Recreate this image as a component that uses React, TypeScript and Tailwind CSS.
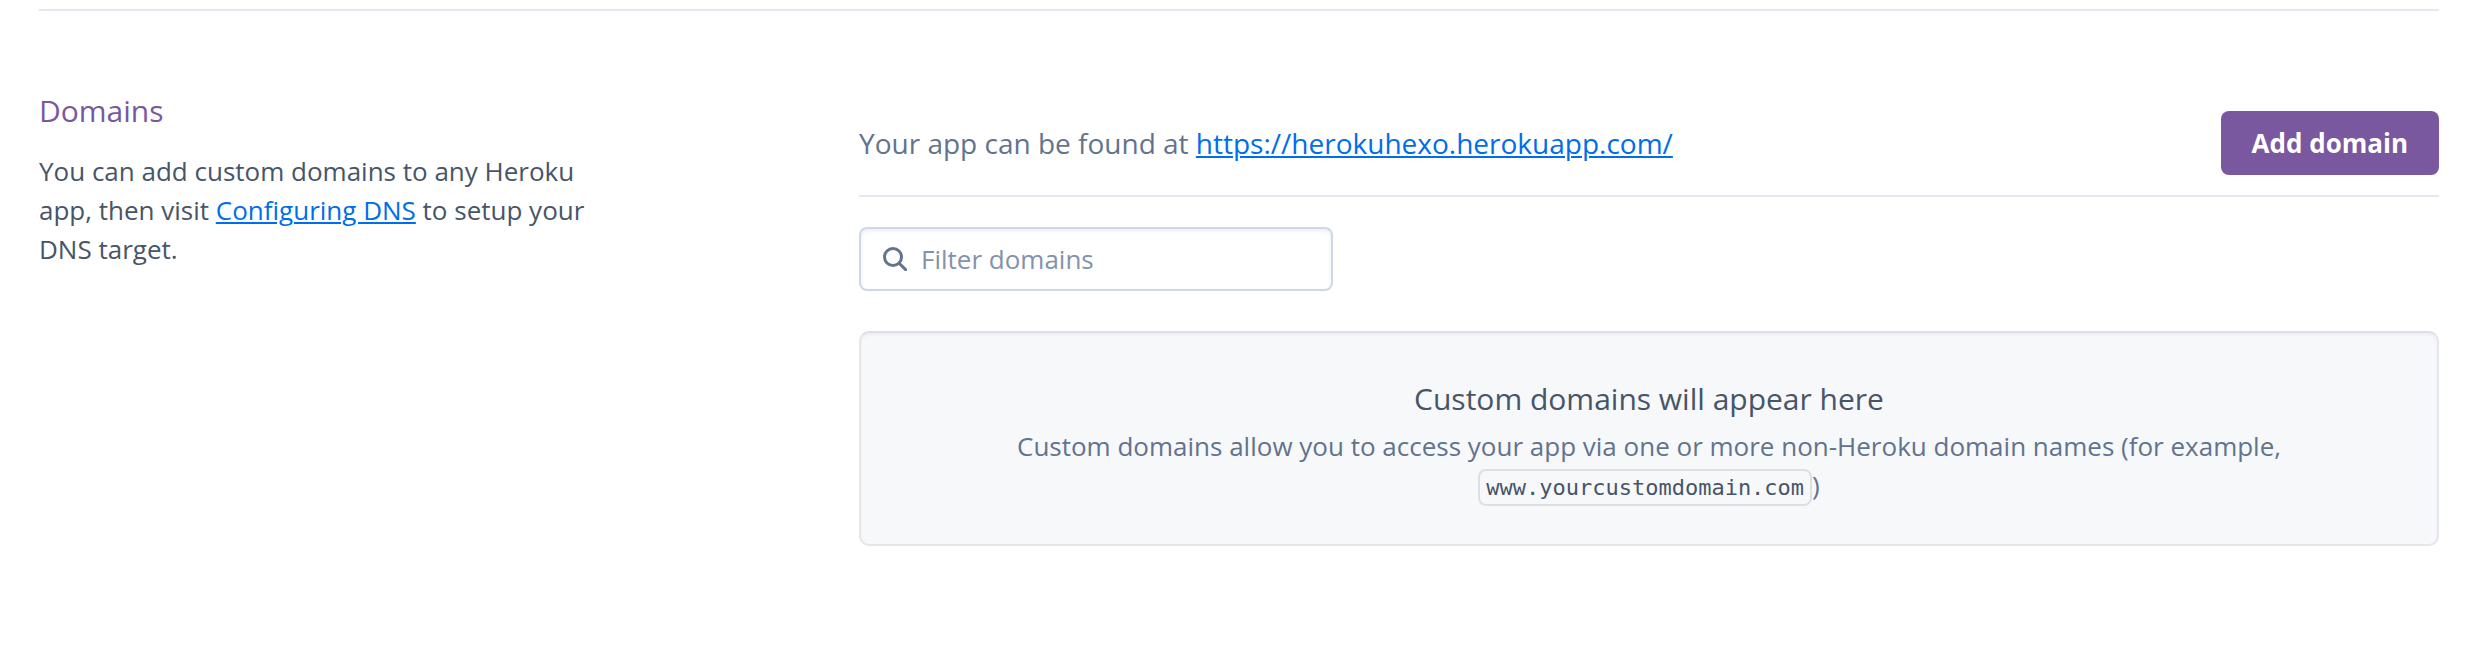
export default function App() {
  return (
    <main className="min-h-screen bg-white px-[39px] pt-[9px] font-['Open_Sans',sans-serif]">
      <section className="grid grid-cols-[1fr_2fr] gap-[30px] border-t-2 border-[#e3e8f3]">
        <div className="pt-20">
          <h2 className="text-[30px] leading-10 text-[#79589f]">Domains</h2>
          <p className="mt-[21px] max-w-[570px] text-[26px] leading-[39px] text-[#475569]">
            You can add custom domains to any Heroku app, then visit{' '}
            <a href="#dns" className="text-[#006deb] underline decoration-2 underline-offset-2">Configuring DNS</a> to setup your
            DNS target.
          </p>
        </div>

        <div className="pt-[100px]">
          <div className="flex items-center justify-between border-b-2 border-[#e3e8f3] pb-5">
            <p className="text-[28px] leading-10 text-[#62738d]">
              Your app can be found at{' '}
              <a href="https://herokuhexo.herokuapp.com/" className="text-[#006deb] underline decoration-2 underline-offset-2">
                https://herokuhexo.herokuapp.com/
              </a>
            </p>
            <button type="button" className="h-16 rounded-lg bg-[#79589f] px-[31px] text-[26px] font-bold text-white">
              Add domain
            </button>
          </div>

          <label className="mt-[30px] flex h-16 w-[30%] items-center gap-[14px] rounded-lg border-2 border-[#cfd7e6] pl-[22px] shadow-[inset_0_2px_4px_#e9edf5]">
            <svg viewBox="0 0 24 24" className="size-6 shrink-0" fill="none" stroke="#62738d" aria-hidden="true">
              <circle cx="10" cy="10" r="8.5" strokeWidth="3" />
              <path d="M16.2 16.2L22.6 22.6" strokeWidth="3" strokeLinecap="round" />
            </svg>
            <input
              type="text"
              aria-label="Filter domains"
              placeholder="Filter domains"
              className="min-w-0 flex-1 bg-transparent text-[26px] leading-[39px] text-[#475569] outline-none placeholder:text-[#8492a9]"
            />
          </label>

          <div className="mt-10 rounded-[10px] border-2 border-[#e4e6e9] border-t-[#dcdfe3] bg-[#f7f8fa] px-32 pt-[46px] pb-[37px] text-center shadow-[inset_0_2px_3px_#eceef1]">
            <h3 className="text-[30px] leading-10 text-[#475569]">Custom domains will appear here</h3>
            <p className="mt-2 text-[26px] leading-[39px] text-[#62738d]">
              Custom domains allow you to access your app via one or more non-Heroku domain names (for example,{' '}
              <code className="rounded-lg border-2 border-[#dddfe2] px-[6px] py-1 font-['DejaVu_Sans_Mono',monospace] text-[22px] text-[#475569]">
                www.yourcustomdomain.com
              </code>
              )
            </p>
          </div>
        </div>
      </section>
    </main>
  );
}
